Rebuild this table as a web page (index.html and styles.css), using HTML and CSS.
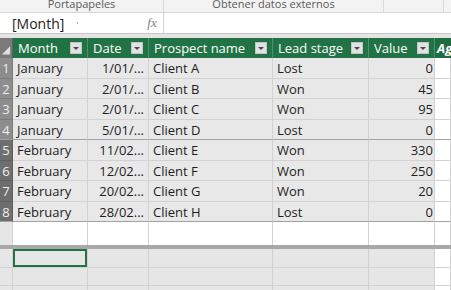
FILE: index.html
```html
<!DOCTYPE html>
<html>
<head>
<meta charset="utf-8">
<link rel="stylesheet" href="styles.css">
</head>
<body>
<div class="ribbon">
  <div class="rgroup g1"><span class="rlabel">Portapapeles</span></div>
  <div class="rgroup g2"><span class="rlabel">Obtener datos externos</span></div>
  <div class="rgroup g3"></div>
  <div class="rgroup g4"></div>
</div>
<div class="fbar">
  <div class="namebox"><span class="name">[Month]</span><span class="dot"></span></div>
  <div class="fx">fx</div>
  <div class="finput"></div>
</div>
<div class="gap"></div>
<div class="sheet">
  <div class="row hdr">
    <div class="c rh corner"><svg width="13" height="20" viewBox="0 0 13 20"><polygon points="2,17 11,17 11,8" fill="#dedede"/></svg></div>
    <div class="c h"><span>Month</span><i class="dd"></i></div>
    <div class="c h"><span>Date</span><i class="dd"></i></div>
    <div class="c h"><span>Prospect name</span><i class="dd"></i></div>
    <div class="c h"><span>Lead stage</span><i class="dd"></i></div>
    <div class="c h"><span>Value</span><i class="dd"></i></div>
    <div class="c h ag">Ag</div>
  </div>
  <div class="row d a">
    <div class="c rh">1</div><div class="c">January</div><div class="c num">1/01/...</div><div class="c">Client A</div><div class="c">Lost</div><div class="c num">0</div><div class="c ext"></div>
  </div>
  <div class="row d a">
    <div class="c rh">2</div><div class="c">January</div><div class="c num">2/01/...</div><div class="c">Client B</div><div class="c">Won</div><div class="c num">45</div><div class="c ext"></div>
  </div>
  <div class="row d a">
    <div class="c rh">3</div><div class="c">January</div><div class="c num">2/01/...</div><div class="c">Client C</div><div class="c">Won</div><div class="c num">95</div><div class="c ext"></div>
  </div>
  <div class="row d a brk">
    <div class="c rh">4</div><div class="c">January</div><div class="c num">5/01/...</div><div class="c">Client D</div><div class="c">Lost</div><div class="c num">0</div><div class="c ext"></div>
  </div>
  <div class="row d b">
    <div class="c rh">5</div><div class="c">February</div><div class="c num">11/02...</div><div class="c">Client E</div><div class="c">Won</div><div class="c num">330</div><div class="c ext"></div>
  </div>
  <div class="row d b">
    <div class="c rh">6</div><div class="c">February</div><div class="c num">12/02...</div><div class="c">Client F</div><div class="c">Won</div><div class="c num">250</div><div class="c ext"></div>
  </div>
  <div class="row d b">
    <div class="c rh">7</div><div class="c">February</div><div class="c num">20/02...</div><div class="c">Client G</div><div class="c">Won</div><div class="c num">20</div><div class="c ext"></div>
  </div>
  <div class="row d b brk">
    <div class="c rh">8</div><div class="c">February</div><div class="c num">28/02...</div><div class="c">Client H</div><div class="c">Lost</div><div class="c num">0</div><div class="c ext"></div>
  </div>
  <div class="row blank">
    <div class="c rh"></div><div class="c"></div><div class="c"></div><div class="c"></div><div class="c"></div><div class="c"></div><div class="c ext"></div>
  </div>
  <div class="split"></div>
  <div class="row calc r1">
    <div class="c rh"></div><div class="c sel"></div><div class="c"></div><div class="c"></div><div class="c"></div><div class="c"></div><div class="c ext"></div>
  </div>
  <div class="row calc r2">
    <div class="c rh"></div><div class="c"></div><div class="c"></div><div class="c"></div><div class="c"></div><div class="c"></div><div class="c ext"></div>
  </div>
  <div class="row calc r3">
    <div class="c rh"></div><div class="c"></div><div class="c"></div><div class="c"></div><div class="c"></div><div class="c"></div><div class="c ext"></div>
  </div>
</div>
</body>
</html>
```
FILE: styles.css
```css
html, body {
  margin: 0;
  padding: 0;
}
body {
  width: 451px;
  height: 290px;
  overflow: hidden;
  background: #ffffff;
  font-family: "Open Sans", "Noto Sans", sans-serif;
}

/* ribbon strip */
.ribbon {
  height: 13px;
  box-sizing: border-box;
  background: #f3f3f3;
  border-bottom: 1px solid #d6d6d6;
  display: flex;
  overflow: hidden;
}
.rgroup {
  box-sizing: border-box;
  border-right: 1px solid #dadada;
  display: flex;
  justify-content: center;
  align-items: flex-start;
}
.g1 { width: 164px; }
.g2 { width: 220px; }
.g3 { width: 60px; }
.g4 { flex: 1; border-right: none; }
.rlabel {
  font-size: 11px;
  line-height: 7px;
  color: #5a5a5a;
  white-space: nowrap;
}

/* formula bar */
.fbar {
  height: 20px;
  display: flex;
  background: #ffffff;
}
.namebox {
  width: 141px;
  box-sizing: border-box;
  padding-left: 12px;
  display: flex;
  align-items: center;
}
.name {
  width: 65px;
  font-size: 14px;
  color: #222222;
  white-space: nowrap;
}
.dot {
  width: 1px;
  height: 2px;
  background: #b0b0b0;
}
.fx {
  width: 23px;
  box-sizing: border-box;
  border-right: 1px solid #d4d4d4;
  font-family: "Liberation Serif", serif;
  font-style: italic;
  font-size: 13px;
  color: #808080;
  display: flex;
  align-items: center;
  justify-content: center;
}
.finput { flex: 1; }

.gap {
  height: 5px;
  box-sizing: border-box;
  background: #e4e4e4;
  border-top: 1px solid #c8c8c8;
}

/* sheet */
.row {
  display: grid;
  grid-template-columns: 13px 75px 61px 124px 96px 66px 1fr;
}
.hdr { height: 20px; }
.d:nth-child(even) { height: 21px; }
.d:nth-child(odd) { height: 20px; }
.blank { height: 23px; }
.r1 { height: 19px; }
.r2 { height: 18px; }
.r3 { height: 18px; }

.c {
  box-sizing: border-box;
  border-right: 1px solid #d2d2d2;
  border-bottom: 1px solid #d2d2d2;
  background: #e8e8e8;
  padding: 0 4px;
  display: flex;
  align-items: center;
  font-size: 13px;
  color: #1e1e1e;
  white-space: nowrap;
  overflow: hidden;
}
.num {
  justify-content: flex-end;
  padding-right: 4px;
}
.d .c:nth-child(6) { padding-right: 1px; }
.c.ext { background: #ffffff; }

.rh {
  padding: 0;
  justify-content: center;
  color: #eeeeee;
  background: #6e6e6e;
  border-right: 1px solid #5e5e5e;
  border-bottom: 1px solid #5e5e5e;
}
.a .rh { background: #8d8d8d; border-color: #7c7c7c; }
.brk .c { border-bottom-color: #a2a2a2; }

/* header */
.h {
  background: #217346;
  color: #ffffff;
  border-right: 1px solid #4e9368;
  border-bottom: none;
  padding: 0 5px 0 5px;
  justify-content: space-between;
}
.corner {
  background: #7a7a7a;
  border-bottom: none;
  padding: 0;
}
.corner svg { display: block; }
.dd {
  width: 12px;
  height: 12px;
  box-sizing: border-box;
  background: #e2e2e2;
  border: 1px solid #c4c4c4;
  display: flex;
  align-items: center;
  justify-content: center;
  flex-shrink: 0;
}
.dd::after {
  content: "";
  width: 0;
  height: 0;
  border-left: 3px solid transparent;
  border-right: 3px solid transparent;
  border-top: 3px solid #3b4a68;
}
.ag {
  background: #1f6c40;
  font-weight: 700;
  font-style: italic;
  padding-left: 2px;
  border-right: none;
}

/* empty rows */
.blank .c { background: #ffffff; border-bottom: none; }
.blank .rh { background: #e6e6e6; border-right-color: #d2d2d2; }
.split {
  height: 4px;
  background: #a8a8a8;
}
.calc .c { background: #e6e6e6; }
.calc .rh { background: #e6e6e6; border-right-color: #d2d2d2; border-bottom-color: #d2d2d2; }
.calc .c.ext { background: #ffffff; }
.sel { box-shadow: inset 0 0 0 2px #217346; }
```
